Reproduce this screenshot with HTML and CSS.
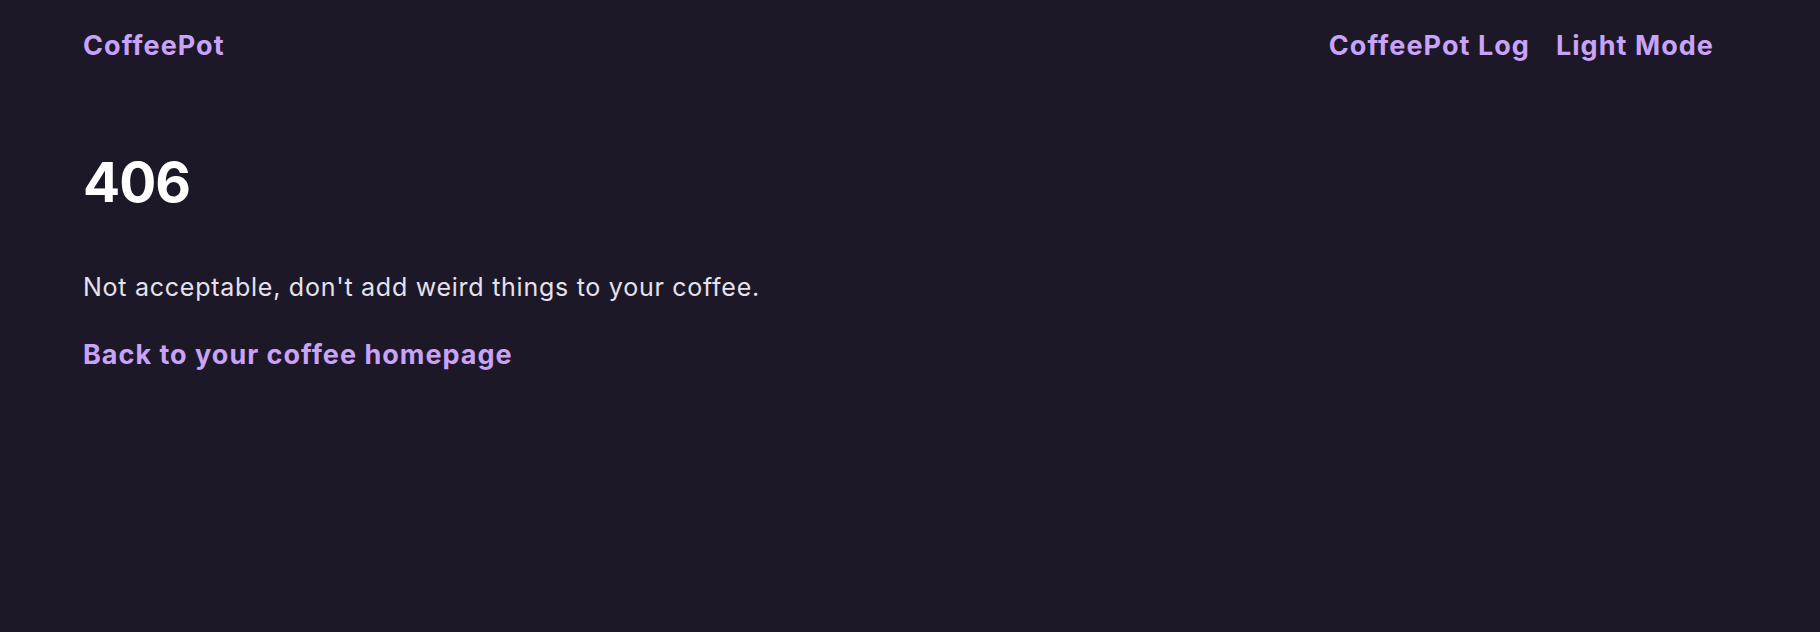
FILE: index.html
```html
<!DOCTYPE html>
<html lang="en">
<head>
<meta charset="utf-8">
<title>406 - CoffeePot</title>
<link rel="stylesheet" href="styles.css">
</head>
<body>
<div class="page">
  <header class="header">
    <a class="brand" href="#">CoffeePot</a>
    <nav class="nav">
      <a class="nav-link" href="#">CoffeePot Log</a>
      <a class="nav-link" href="#">Light Mode</a>
    </nav>
  </header>
  <main class="main">
    <h1 class="code">406</h1>
    <p class="message">Not acceptable, don't add weird things to your coffee.</p>
    <a class="back" href="#">Back to your coffee homepage</a>
  </main>
</div>
</body>
</html>
```

FILE: styles.css
```css
html, body {
  margin: 0;
  padding: 0;
  background: #1c1828;
  height: 100%;
}
body {
  font-family: Inter, "Noto Sans", sans-serif;
  color: #e6e1ec;
}
a {
  text-decoration: none;
  color: #c9a3f7;
}
.page {
  padding: 32px 106px 0 83px;
}
.header {
  display: flex;
  justify-content: space-between;
  align-items: flex-start;
}
.brand, .nav-link {
  font-size: 27px;
  font-weight: 700;
  line-height: 1;
  letter-spacing: 1.05px;
}
.nav {
  display: flex;
  gap: 26px;
}
.main {
  display: flex;
  flex-direction: column;
  align-items: flex-start;
}
.code {
  margin: 96px 0 0;
  font-size: 55px;
  font-weight: 700;
  line-height: 1;
  letter-spacing: -1px;
  color: #ffffff;
}
.message {
  margin: 65px 0 0;
  font-size: 25px;
  line-height: 1;
  letter-spacing: 0.74px;
}
.back {
  margin-top: 41px;
  font-size: 27px;
  font-weight: 700;
  line-height: 1;
  letter-spacing: 1px;
}
```
